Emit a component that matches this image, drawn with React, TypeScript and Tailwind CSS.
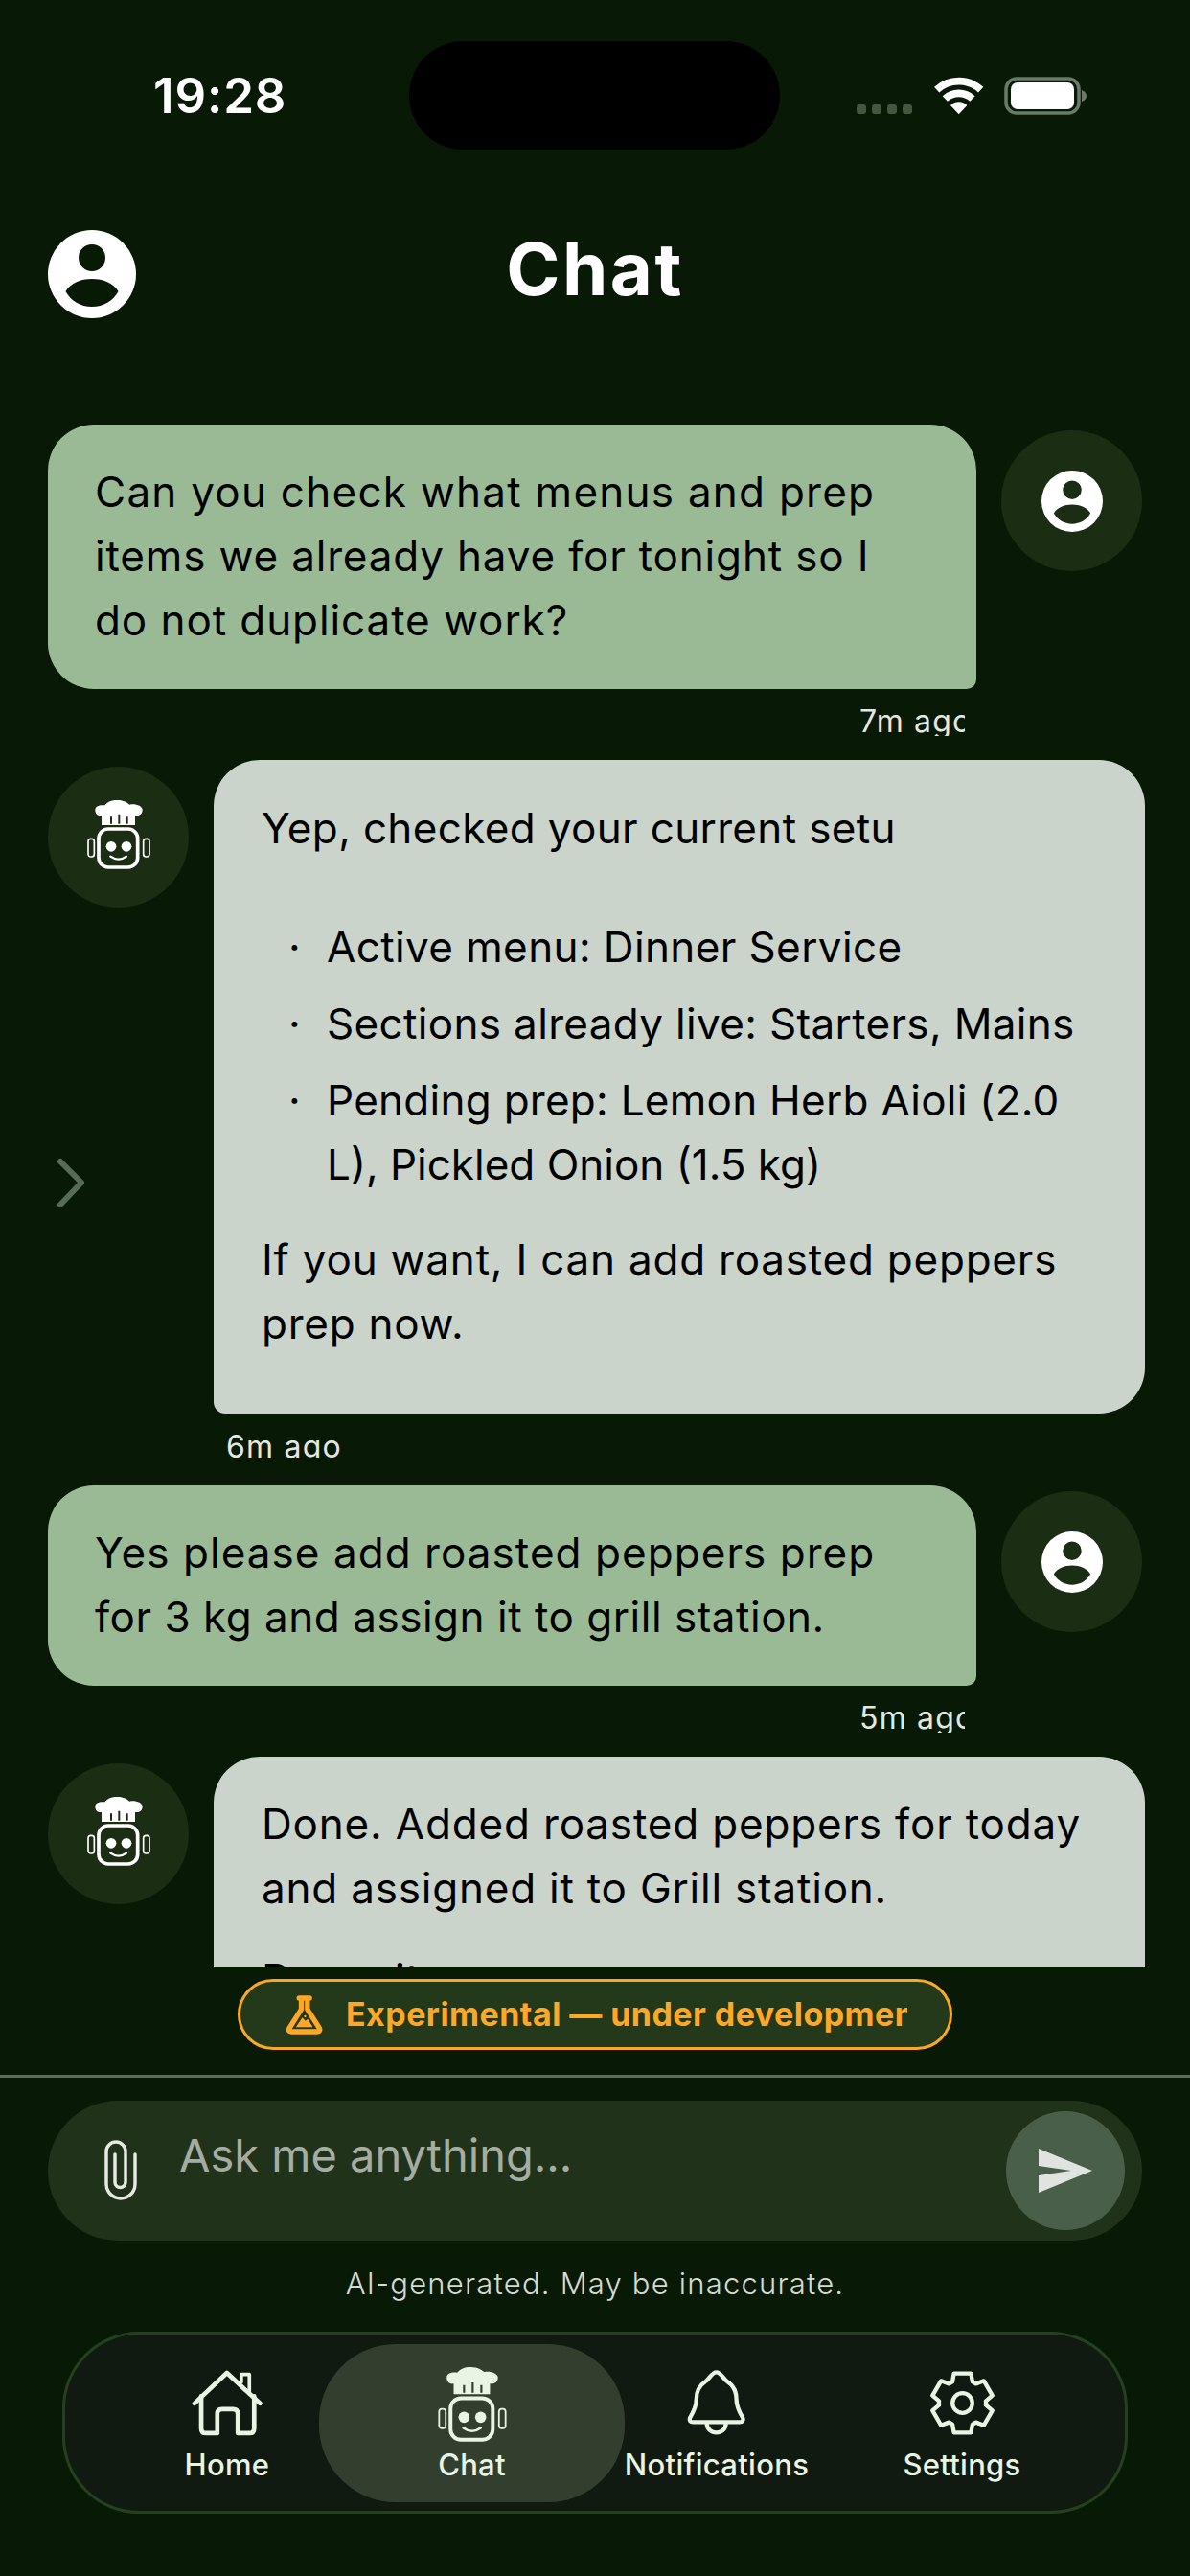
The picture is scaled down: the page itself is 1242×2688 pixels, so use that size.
import React from "react";

function UserAvatarIcon({ size, color }: { size: number; color: string }) {
  return (
    <svg width={size} height={size} viewBox="0 0 92 92">
      <path
        fill={color}
        fillRule="evenodd"
        d="M46 0a46 46 0 1 0 0 92a46 46 0 1 0 0-92ZM46 15a14 14 0 1 1 0 28a14 14 0 1 1 0-28ZM18.5 64C24 55 34 51 46 51C58 51 68 55 73.5 64C68 74 58 80 46 80C34 80 24 74 18.5 64Z"
      />
    </svg>
  );
}

function BotIcon({ w, h, color, slit }: { w: number; h: number; color: string; slit: string }) {
  return (
    <svg width={w} height={h} viewBox="0 0 198 216" fill="none">
      <path
        fill={color}
        d="M45 48C30 50 25 40 25 30C25 18 40 14 55 16C65 5 75 0 95 0C115 0 125 8 133 14C150 10 173 18 173 30C173 42 165 50 150 48V78H45Z"
      />
      <path stroke={slit} strokeWidth="6" d="M75 52V74M100 44V74M125 52V74" />
      <rect x="36" y="90" width="122" height="120" rx="30" stroke={color} strokeWidth="11" />
      <rect x="3" y="121" width="19" height="56" rx="8" stroke={color} strokeWidth="5" />
      <rect x="176" y="121" width="19" height="56" rx="8" stroke={color} strokeWidth="5" />
      <circle cx="75" cy="145" r="16" fill={color} />
      <circle cx="123" cy="145" r="16" fill={color} />
      <path d="M73 176Q98 194 123 176" stroke={color} strokeWidth="7" strokeLinecap="round" />
    </svg>
  );
}

function HomeIcon({ color }: { color: string }) {
  return (
    <svg width="77" height="72" viewBox="85 155 230 215" fill="none" stroke={color} strokeLinecap="round" strokeLinejoin="round">
      <path strokeWidth="14" d="M97 262L198 167L301 262" />
      <path strokeWidth="14" d="M118 240V340Q118 355 133 355H168V295Q168 280 183 280H217Q232 280 232 295V355H268Q283 355 283 340V240" />
      <path strokeWidth="11" d="M243 195V172H268V232" />
    </svg>
  );
}

function BellIcon({ color }: { color: string }) {
  return (
    <svg width="65" height="73" viewBox="80 92 195 220" fill="none" stroke={color} strokeWidth="13" strokeLinecap="round" strokeLinejoin="round">
      <path d="M175 105C190 105 195 125 210 135C230 148 238 165 238 190C238 215 250 235 258 248Q262 262 248 262H102Q88 262 92 248C100 235 112 215 112 190C112 165 120 148 140 135C155 125 160 105 175 105Z" />
      <path d="M145 265C145 305 205 305 205 265" />
    </svg>
  );
}

const gearPath = (() => {
  const cx = 945;
  const cy = 200;
  const pt = (r: number, deg: number) => {
    const a = (deg * Math.PI) / 180;
    return `${(cx + r * Math.sin(a)).toFixed(1)} ${(cy - r * Math.cos(a)).toFixed(1)}`;
  };
  let d = "";
  for (let i = 0; i < 6; i++) {
    const c = i * 60;
    d += `${i === 0 ? "M" : "L"}${pt(74, c - 25)}L${pt(97, c - 16)}L${pt(97, c + 16)}L${pt(74, c + 25)}A74 74 0 0 1 ${pt(74, c + 35)}`;
  }
  return d + "Z";
})();

function GearIcon({ color }: { color: string }) {
  return (
    <svg width="73" height="73" viewBox="835 90 220 220" fill="none" stroke={color} strokeWidth="13" strokeLinejoin="round">
      <path d={gearPath} />
      <circle cx="945" cy="200" r="31" />
    </svg>
  );
}

function FlaskIcon() {
  return (
    <svg width="42" height="45" viewBox="290 270 125 135" fill="none" stroke="#ffa726" strokeLinecap="round" strokeLinejoin="round">
      <path strokeWidth="16" d="M335 285H368M342 285V320L305 378Q298 390 312 390H390Q404 390 398 378L361 320V285" />
      <path fill="#ffa726" stroke="none" d="M325 376L345 346L355 356L362 350L378 376Z" />
      <circle cx="354" cy="342" r="3.5" fill="#ffa726" stroke="none" />
    </svg>
  );
}

function Timestamp({ text, align }: { text: string; align: "user" | "bot" }) {
  return align === "user" ? (
    <div className="flex h-[74px] justify-end pr-[185px]">
      <div className="mt-[16px] h-[33px] w-[110px] overflow-hidden whitespace-nowrap text-[32px] leading-[36px] tracking-[1.2px] text-[#e4e8e2]">
        {text}
      </div>
    </div>
  ) : (
    <div className="flex h-[75px] pl-[186px]">
      <div className="mt-[17px] h-[29px] overflow-hidden whitespace-nowrap text-[32px] leading-[36px] tracking-[1.2px] text-[#e4e8e2]">
        {text}
      </div>
    </div>
  );
}

type Line = { text: string; cls: string };

function Lines({ lines }: { lines: Line[] }) {
  return (
    <>
      {lines.map((l) => (
        <div key={l.text} className={`whitespace-nowrap ${l.cls}`}>{l.text}</div>
      ))}
    </>
  );
}

function UserMessage({ lines }: { lines: Line[] }) {
  return (
    <div className="flex justify-between">
      <div className="w-[969px] rounded-[48px] rounded-br-[10px] bg-[#9aba96] px-[49px] pb-[38px] pt-[37px] text-[44px] leading-[67px] text-black">
        <Lines lines={lines} />
      </div>
      <div className="mt-[6px] flex h-[147px] w-[147px] items-center justify-center rounded-full bg-[#1b2e14]">
        <UserAvatarIcon size={64} color="#ffffff" />
      </div>
    </div>
  );
}

function BotAvatar() {
  return (
    <div className="mt-[7px] flex h-[147px] w-[147px] shrink-0 items-center justify-center rounded-full bg-[#1b2e14] pb-[6px]">
      <BotIcon w={66} h={72} color="#ffffff" slit="#1b2e14" />
    </div>
  );
}

function Bullet({ lines }: { lines: Line[] }) {
  return (
    <div className="flex">
      <div className="w-[68px] pl-[28px]">·</div>
      <div>
        <Lines lines={lines} />
      </div>
    </div>
  );
}

function NavItem({ label, icon, active }: { label: string; icon: React.ReactNode; active?: boolean }) {
  return (
    <div className={`flex h-[165px] flex-col items-center ${active ? "-mx-[32px] w-[319px] rounded-[80px] bg-[#333f2e]" : "relative w-[256px]"}`}>
      <div className="flex h-[102px] items-end pb-[4px]">{icon}</div>
      <div className="mt-[4px] whitespace-nowrap text-[31px] font-medium leading-[40px] tracking-[0.3px] text-[#e8f5e4]">{label}</div>
    </div>
  );
}

export default function App() {
  const navColor = "#e8f5e4";
  return (
    <div className="flex h-[2688px] w-[1242px] flex-col overflow-hidden bg-[#081a06] [font-family:Inter,sans-serif]">
      {/* status bar */}
      <div className="relative flex h-[199px] shrink-0 items-start justify-between pl-[160px] pr-[108px]">
        <div className="mt-[70px] text-[51px] font-semibold leading-[60px] tracking-[0.9px] text-white">19:28</div>
        <div className="absolute left-[427px] top-[43px] h-[113px] w-[387px] rounded-full bg-black" />
        <div className="mt-[80px] flex items-start">
          <div className="mt-[29px] flex gap-[6px]">
            <div className="h-[10px] w-[10px] rounded-[3px] bg-[#44583f]" />
            <div className="h-[10px] w-[10px] rounded-[3px] bg-[#44583f]" />
            <div className="h-[10px] w-[10px] rounded-[3px] bg-[#44583f]" />
            <div className="h-[10px] w-[10px] rounded-[3px] bg-[#44583f]" />
          </div>
          <svg className="ml-[22px]" width="54" height="40" viewBox="398 90 162 120" fill="none" stroke="#fff" strokeWidth="23">
            <path d="M409 131A101 101 0 0 1 547 131" />
            <path d="M435 159A63 63 0 0 1 521 159" />
            <path fill="#fff" stroke="none" d="M478 208L452 180A36 36 0 0 1 504 180Z" />
          </svg>
          <svg className="ml-[20px]" width="86" height="40" viewBox="0 0 86 40" fill="none">
            <rect x="2" y="2" width="76" height="36" rx="11" stroke="#6a7a68" strokeWidth="3.5" />
            <rect x="7" y="6" width="66" height="28" rx="7" fill="#fff" />
            <path d="M81 14Q86 16 86 20Q86 24 81 26Z" fill="#6a7a68" />
          </svg>
        </div>
      </div>

      {/* header */}
      <div className="relative flex h-[244px] shrink-0 justify-center">
        <div className="absolute left-[50px] top-[41px]">
          <UserAvatarIcon size={92} color="#ffffff" />
        </div>
        <div className="mt-[38px] text-[76px] font-bold leading-[86px] tracking-[2.5px] text-white">Chat</div>
      </div>

      {/* messages */}
      <div className="relative h-[1609px] shrink-0 overflow-hidden pl-[50px] pr-[50px]">
        <UserMessage
          lines={[
            { text: "Can you check what menus and prep", cls: "tracking-[1.25px]" },
            { text: "items we already have for tonight so I", cls: "tracking-[0.83px]" },
            { text: "do not duplicate work?", cls: "tracking-[0.92px]" },
          ]}
        />
        <Timestamp text="7m ago" align="user" />

        <div className="-mr-[3px] flex justify-between">
          <BotAvatar />
          <div className="w-[972px] rounded-[48px] rounded-bl-[12px] bg-[#cbd4cb] pb-[60px] pl-[50px] pr-[40px] pt-[38px] text-[44px] leading-[67px] text-black">
            <div className="w-[660px] overflow-hidden whitespace-nowrap tracking-[0.35px]">Yep, checked your current setup:</div>
            <div className="mt-[57px] flex flex-col gap-[13px]">
              <Bullet lines={[{ text: "Active menu: Dinner Service", cls: "tracking-[0.39px]" }]} />
              <Bullet lines={[{ text: "Sections already live: Starters, Mains", cls: "tracking-[0.34px]" }]} />
              <Bullet
                lines={[
                  { text: "Pending prep: Lemon Herb Aioli (2.0", cls: "tracking-[0.27px]" },
                  { text: "L), Pickled Onion (1.5 kg)", cls: "tracking-[0px]" },
                ]}
              />
            </div>
            <div className="mt-[32px]">
              <Lines
                lines={[
                  { text: "If you want, I can add roasted peppers", cls: "tracking-[0.78px]" },
                  { text: "prep now.", cls: "tracking-[0.75px]" },
                ]}
              />
            </div>
          </div>
        </div>
        <Timestamp text="6m ago" align="bot" />

        <UserMessage
          lines={[
            { text: "Yes please add roasted peppers prep", cls: "tracking-[1.05px]" },
            { text: "for 3 kg and assign it to grill station.", cls: "tracking-[0.52px]" },
          ]}
        />
        <Timestamp text="5m ago" align="user" />

        <div className="-mr-[3px] flex justify-between">
          <BotAvatar />
          <div className="w-[972px] rounded-[48px] rounded-bl-[12px] bg-[#cbd4cb] pb-[61px] pl-[50px] pr-[40px] pt-[37px] text-[44px] leading-[67px] text-black">
            <Lines
              lines={[
                { text: "Done. Added roasted peppers for today", cls: "tracking-[0.83px]" },
                { text: "and assigned it to Grill station.", cls: "tracking-[0.79px]" },
              ]}
            />
            <div className="mt-[28px] whitespace-nowrap tracking-[1px]">Deposit</div>
          </div>
        </div>

        <svg className="absolute left-[57px] top-[764px]" width="36" height="56" viewBox="0 0 36 56" fill="none" stroke="#566c56" strokeWidth="6" strokeLinecap="round" strokeLinejoin="round">
          <path d="M6 5L28 27L6 50" />
        </svg>
      </div>

      {/* experimental pill */}
      <div className="mt-[13px] flex shrink-0 justify-center">
        <div className="flex h-[74px] w-[746px] items-center rounded-full border-[3px] border-[#f9a825] bg-[#24391a] pl-[46px]">
          <FlaskIcon />
          <div className="ml-[22px] w-[586px] overflow-hidden whitespace-nowrap text-[34px] font-bold leading-[44px] tracking-[0.45px] text-[#ffa726]">
            Experimental — under development
          </div>
        </div>
      </div>

      {/* divider */}
      <div className="mt-[26px] h-[3px] shrink-0 bg-[#5d6e58]" />

      {/* input */}
      <div className="mx-[50px] mt-[24px] flex h-[146px] shrink-0 items-center rounded-full bg-[#203219] pl-[58px] pr-[18px]">
        <svg width="36" height="66" viewBox="0 0 36 66" fill="none" stroke="#e5e8e3" strokeWidth="3.5" strokeLinecap="round">
          <path d="M33 16V47A15 15 0 0 1 3 47V13A10 10 0 0 1 23 13V45A5.5 5.5 0 0 1 12 45V16" />
        </svg>
        <div className="ml-[43px] flex-1 self-start pt-[29px] text-[47px] leading-[56px] text-[#a5ada3]">Ask me anything...</div>
        <div className="flex h-[124px] w-[124px] items-center justify-center rounded-full bg-[#4a5f4a]">
          <svg width="56" height="46" viewBox="0 0 56 46" fill="#e0e4df">
            <path d="M0 0L56 23L0 46V28L34 23L0 18Z" />
          </svg>
        </div>
      </div>

      {/* caption */}
      <div className="mt-[25px] shrink-0 text-center text-[31px] font-light leading-[40px] tracking-[1.2px] text-[#d5dad3]">
        AI-generated. May be inaccurate.
      </div>

      {/* nav */}
      <div className="mx-[65px] mt-[30px] flex h-[190px] shrink-0 items-center rounded-[80px] border-[3px] border-[#25401d] bg-[#111a10] pl-[41px]">
        <NavItem label="Home" icon={<HomeIcon color={navColor} />} />
        <NavItem
          label="Chat"
          active
          icon={
            <div className="translate-y-[4px]">
              <BotIcon w={74} h={78} color={navColor} slit="#333f2e" />
            </div>
          }
        />
        <NavItem label="Notifications" icon={<BellIcon color={navColor} />} />
        <NavItem label="Settings" icon={<GearIcon color={navColor} />} />
      </div>
    </div>
  );
}
